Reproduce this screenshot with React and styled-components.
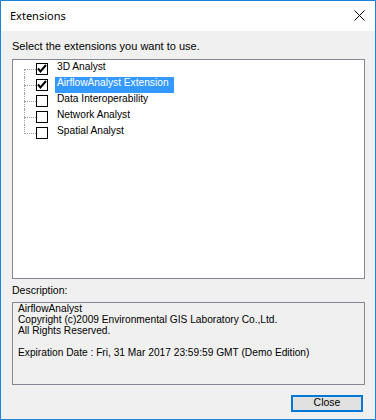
import React from "react";
import styled, { createGlobalStyle } from "styled-components";

const Global = createGlobalStyle`
  html, body { margin: 0; padding: 0; background: #ffffff; }
  body { font-family: "Liberation Sans", Arial, sans-serif; }
  * { box-sizing: border-box; }
`;

const Window = styled.div`
  width: 376px;
  height: 420px;
  border: 1px solid #1883d7;
  display: flex;
  flex-direction: column;
  background: #f0f0f0;
`;

const TitleBar = styled.div`
  height: 30px;
  background: #ffffff;
  display: flex;
  align-items: center;
  justify-content: space-between;
  padding: 0 10px 1px 9px;
`;

const Title = styled.span`
  font-family: "Noto Sans", "Open Sans", sans-serif;
  font-size: 11px;
  color: #000;
`;

const CloseIcon = styled.svg`
  width: 11px;
  height: 11px;
  display: block;
`;

const Body = styled.div`
  flex: 1;
  display: flex;
  flex-direction: column;
  padding: 8px 10px 0 11px;
`;

const Label = styled.div`
  font-size: ${(p) => p.$size || 10.5}px;
  line-height: 14px;
  height: 14px;
  color: #000;
  margin-bottom: ${(p) => p.$gap}px;
  white-space: nowrap;
`;

const TreeBox = styled.div`
  height: 220px;
  background: #ffffff;
  border: 1px solid #828790;
  padding: 1px 0 0 11px;
  margin-bottom: 4px;
`;

const Row = styled.div`
  display: flex;
  align-items: center;
  height: 16px;
`;

const Connector = styled.div`
  position: relative;
  width: 12px;
  height: 16px;
  &::before {
    content: "";
    position: absolute;
    left: 0;
    top: 8px;
    width: 12px;
    border-top: 1px dotted #a0a0a0;
  }
  &::after {
    content: "";
    position: absolute;
    left: 0;
    top: ${(p) => (p.$pos === "first" ? "8px" : "0")};
    height: ${(p) => (p.$pos === "last" ? "9px" : p.$pos === "first" ? "8px" : "16px")};
    border-left: 1px dotted #a0a0a0;
  }
`;

const Box = styled.span`
  width: 12px;
  height: 12px;
  border: 1px solid #000;
  background: #fff;
  display: flex;
  align-items: center;
  justify-content: center;
`;

const ItemText = styled.span`
  margin-left: 7px;
  font-size: 10.2px;
  line-height: 12px;
  height: 16px;
  padding: 0 5px 4px 2px;
  white-space: nowrap;
  color: ${(p) => (p.$selected ? "#ffffff" : "#000000")};
  background: ${(p) => (p.$selected ? "#3399ff" : "transparent")};
`;

const DescBox = styled.div`
  height: 83px;
  border: 1px solid #828790;
  background: #f0f0f0;
  padding: 1px 5px 0 5px;
  font-size: 10.2px;
  line-height: 10.9px;
  color: #000;
  margin-bottom: 10px;
`;

const DescLine = styled.div`
  height: 10.9px;
  white-space: nowrap;
`;

const Footer = styled.div`
  display: flex;
  justify-content: flex-end;
  padding-right: 2px;
`;

const Button = styled.button`
  width: 72px;
  height: 17px;
  border: 2px solid #0078d7;
  background: #e1e1e1;
  font-family: "Liberation Sans", Arial, sans-serif;
  font-size: 10.5px;
  line-height: 11px;
  padding: 0 0 2px 0;
  color: #000;
  margin: 0;
`;

const items = [
  { name: "3D Analyst", checked: true },
  { name: "AirflowAnalyst Extension", checked: true, selected: true },
  { name: "Data Interoperability", checked: false },
  { name: "Network Analyst", checked: false },
  { name: "Spatial Analyst", checked: false },
];

function Check({ checked }) {
  return (
    <Box>
      {checked && (
        <svg width="10" height="10" viewBox="0 0 10 10">
          <polyline
            points="1,4.5 3.5,7.5 9,1"
            fill="none"
            stroke="#000"
            strokeWidth="2"
          />
        </svg>
      )}
    </Box>
  );
}

const desc = [
  "AirflowAnalyst",
  "Copyright (c)2009 Environmental GIS Laboratory Co.,Ltd.",
  "All Rights Reserved.",
  "",
  "Expiration Date : Fri, 31 Mar 2017 23:59:59 GMT (Demo Edition)",
];

export default function App() {
  return (
    <>
      <Global />
      <Window>
        <TitleBar>
          <Title>Extensions</Title>
          <CloseIcon viewBox="0 0 11 11">
            <path d="M0.5 0.5 L10.5 10.5 M10.5 0.5 L0.5 10.5" stroke="#000" strokeWidth="1" fill="none" />
          </CloseIcon>
        </TitleBar>
        <Body>
          <Label $size={11} $gap={6}>Select the extensions you want to use.</Label>
          <TreeBox>
            {items.map((it, i) => (
              <Row key={it.name}>
                <Connector $pos={i === 0 ? "first" : i === items.length - 1 ? "last" : "mid"} />
                <Check checked={it.checked} />
                <ItemText $selected={it.selected}>{it.name}</ItemText>
              </Row>
            ))}
          </TreeBox>
          <Label $gap={5}>Description:</Label>
          <DescBox>
            {desc.map((l, i) => (
              <DescLine key={i}>{l}</DescLine>
            ))}
          </DescBox>
          <Footer>
            <Button>Close</Button>
          </Footer>
        </Body>
      </Window>
    </>
  );
}
